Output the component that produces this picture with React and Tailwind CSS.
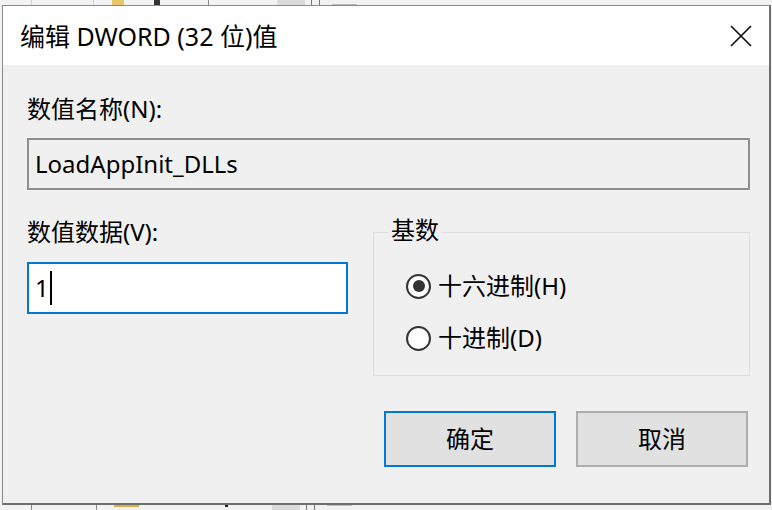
export default function App() {
  const font = "font-['Segoe_UI','Noto_Sans','Noto_Sans_CJK_SC',sans-serif]";
  return (
    <div className={`w-[772px] h-[510px] bg-[#f2f2f2] overflow-hidden flex flex-col text-black ${font}`}>
      {/* background strip top */}
      <div className="h-[5px] flex shrink-0">
        <div className="w-[31px]" />
        <div className="w-px bg-[#d0d0d0]" />
        <div className="w-[61px]" />
        <div className="w-px bg-[#d0d0d0]" />
        <div className="w-[18px]" />
        <div className="w-[12px] bg-[#e8c66a]" />
        <div className="w-[30px]" />
        <div className="w-[6px] bg-[#333]" />
        <div className="w-[48px]" />
        <div className="w-px bg-[#888]" />
        <div className="w-[68px]" />
        <div className="w-[28px] bg-[#dadada]" />
        <div className="w-[6px]" />
        <div className="w-px bg-[#777]" />
        <div className="w-[7px]" />
        <div className="w-px bg-[#777]" />
        <div className="w-[12px]" />
        <div className="w-[25px] border-b border-[#bbb]" />
      </div>

      {/* dialog */}
      <div className="ml-[2px] w-[769px] h-[500px] shrink-0 flex flex-col bg-[#f0f0f0] border-l border-t border-r-2 border-b-2 border-l-[#8a8a8a] border-t-[#8a8a8a] border-r-[#6e6e6e] border-b-[#6e6e6e]">
        {/* title bar */}
        <div className="h-[59px] shrink-0 bg-white flex items-center justify-between pl-[17px] pr-[17px]">
          <span className="text-[25px] leading-[32px]">编辑 DWORD (32 位)值</span>
          <svg width="22" height="22" viewBox="0 0 22 22">
            <path d="M1 1 L21 21 M21 1 L1 21" stroke="#111" strokeWidth="1.7" fill="none" />
          </svg>
        </div>

        {/* content */}
        <div className="flex-1 pl-[24px] text-[24px]">
          <div className="mt-[28px] h-[32px] leading-[32px]">数值名称(N):</div>
          <div className="mt-[13px] w-[723px] h-[52px] border-2 border-[#8e8e8e] bg-[#f0f0f0] flex items-center pl-[6px]">
            <span className="leading-[32px]">LoadAppInit_DLLs</span>
          </div>

          <div className="mt-[26px] flex">
            <div className="w-[321px] flex flex-col">
              <div className="h-[32px] leading-[32px]">数值数据(V):</div>
              <div className="mt-[14px] w-[321px] h-[52px] border-2 border-[#0078d7] bg-white flex items-center pl-[6px]">
                <span className="leading-[32px]">1</span>
                <span className="ml-[1px] w-[2px] h-[34px] bg-black" />
              </div>
            </div>

            <fieldset className="ml-[25px] w-[377px] border border-[#dcdcdc] px-[14px] pb-[21px]">
              <legend className="px-[3px] h-[32px] leading-[28px]">基数</legend>
              <div className="mt-[22px] h-[32px] flex items-center pl-[18px]">
                <span className="w-[25px] h-[25px] rounded-full border-2 border-[#333] bg-white flex items-center justify-center">
                  <span className="w-[12px] h-[12px] rounded-full bg-[#333]" />
                </span>
                <span className="ml-[7px] leading-[32px]">十六进制(H)</span>
              </div>
              <div className="mt-[20px] h-[32px] flex items-center pl-[18px]">
                <span className="w-[25px] h-[25px] rounded-full border-2 border-[#333] bg-white" />
                <span className="ml-[7px] leading-[32px]">十进制(D)</span>
              </div>
            </fieldset>
          </div>

          <div className="mt-[35px] flex pl-[357px] gap-[20px]">
            <div className="w-[172px] h-[56px] border-2 border-[#0078d7] bg-[#e1e1e1] flex items-center justify-center">
              <span className="leading-[32px]">确定</span>
            </div>
            <div className="w-[172px] h-[56px] border-2 border-[#adadad] bg-[#e1e1e1] flex items-center justify-center">
              <span className="leading-[32px]">取消</span>
            </div>
          </div>
        </div>
      </div>

      {/* background strip bottom */}
      <div className="flex-1 flex">
        <div className="w-[31px]" />
        <div className="w-px bg-[#888]" />
        <div className="w-[64px]" />
        <div className="w-px bg-[#888]" />
        <div className="w-[17px]" />
        <div className="w-[25px] h-[2px] bg-[#d6b04a]" />
        <div className="w-[86px]" />
        <div className="w-[3px] h-[2px] bg-[#222]" />
        <div className="w-[44px]" />
        <div className="w-[28px] bg-[#dadada]" />
        <div className="w-[6px]" />
        <div className="w-px bg-[#777]" />
        <div className="w-[7px]" />
        <div className="w-px bg-[#777]" />
        <div className="w-[12px]" />
        <div className="w-[25px] border-t border-[#bbb]" />
      </div>
    </div>
  );
}
